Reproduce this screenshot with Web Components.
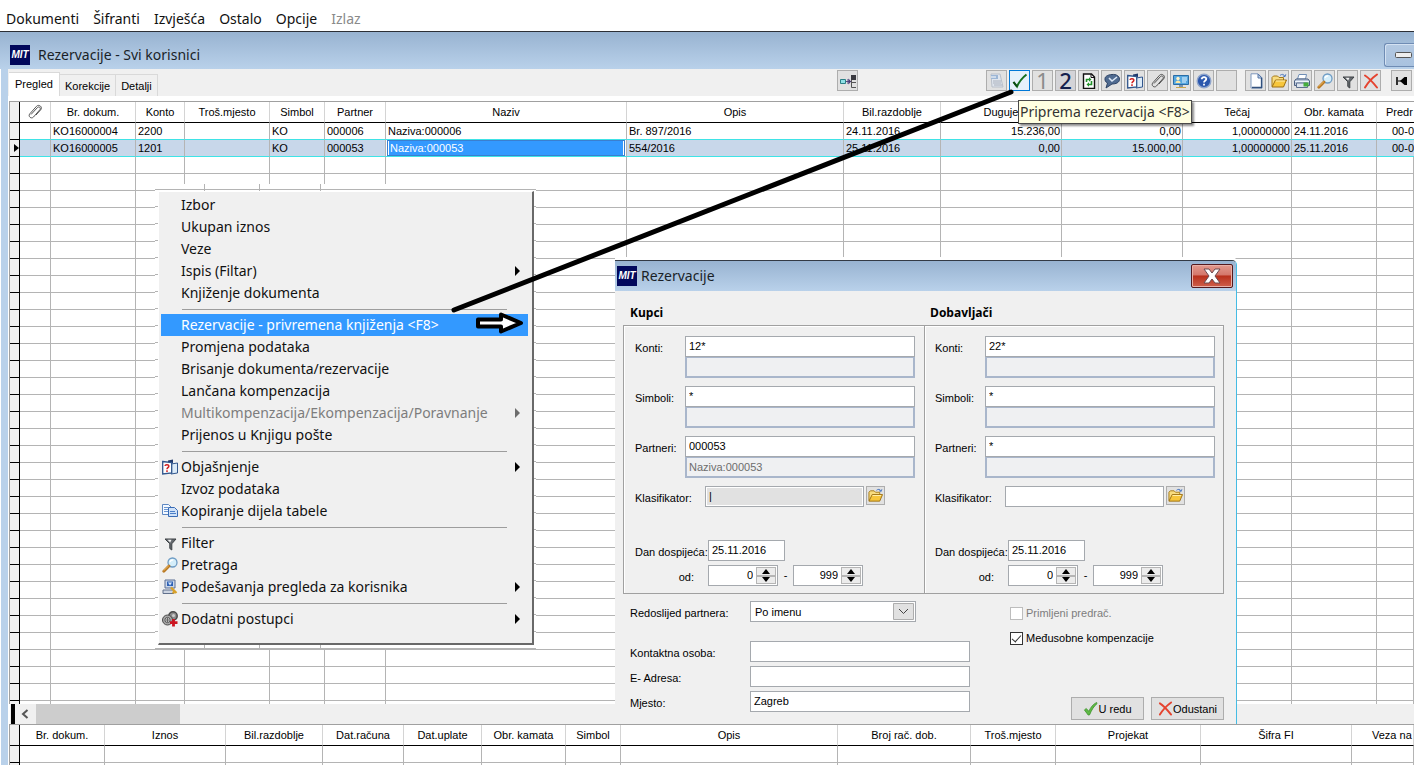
<!DOCTYPE html>
<html lang="hr">
<head>
<meta charset="utf-8">
<title>Rezervacije - Svi korisnici</title>
<style>
  html, body { margin: 0; height: 100%; overflow: hidden; background: #fff; }
</style>
</head>
<body>
<mit-app></mit-app>

<script>
const UI = '"Noto Sans", "Open Sans", sans-serif';
const SMALL = '"Liberation Sans", Arial, sans-serif';

function define(name, css, html, setup) {
  const template = document.createElement('template');
  template.innerHTML = `<style>*{box-sizing:border-box}${css}</style>${html}`;
  customElements.define(name, class extends HTMLElement {
    connectedCallback() {
      if (this.shadowRoot) return;
      this.attachShadow({ mode: 'open' }).append(template.content.cloneNode(true));
      if (setup) setup(this, this.shadowRoot);
    }
  });
}

/* ---------- icons, drawn on a 16 x 16 field ---------- */
const ICONS = {
  tree: `<path d="M0.5 6.5h5v4h-5z" fill="#8fe0e6" stroke="#2a7f86"/><path d="M6 8.5h5M8 6v5" stroke="#5b4a86" fill="none"/><path d="M8.500 5.500v6l2.500-3z" fill="#4a3a76"/><path d="M11 2h5v5h-5z" fill="#3a3a40"/><path d="M16 9.500h-4.500v5H16M11.500 7v3" stroke="#555" fill="none"/>`,
  form: `<path d="M2 1h9l3 13H3z" fill="#dfe5ee" stroke="#b9bfc9"/><path d="M2 2h7v4H2z" fill="#9cb6d6"/><path d="M4 8h8M4 10h8M5 12h8" stroke="#aab0bb"/><path d="M2 4h5" stroke="#fff"/>`,
  check: `<path d="M1.500 9L5 13.500C7 9 10 5 14.500 1.500" fill="none" stroke="#15701f" stroke-width="2"/><path d="M1.500 9L5 13.500" stroke="#0c4a12" stroke-width="2"/>`,
  refresh: `<path d="M2.500 1h8l3 3v11.500h-11z" fill="#fff" stroke="#111" stroke-width="1.400"/><path d="M10 1v3.500h3.500" fill="none" stroke="#111"/><path d="M5.500 9V6.500H8M10.500 8v3.500H8" fill="none" stroke="#23922b" stroke-width="1.600"/><path d="M8 4.200l2.500 2.300L8 8.800zM8 9.200l-2.500 2.300L8 13.800z" fill="#23922b"/>`,
  bubble: `<path d="M8 1.500C12 1 15.500 3 15.500 6.200 15.500 9.500 12 11 8 11L2 15 3.500 10C1.500 9 .8 7.500 1 5.500 1.300 3 4.500 1.700 8 1.500z" fill="#4f6a90" stroke="#2c4264"/><path d="M5 5l3 3 5-4" stroke="#dce8f6" stroke-width="1.600" fill="none"/>`,
  help2: `<path d="M6 1.500l5-1V4H6z" fill="#223a6c"/><path d="M9 5l6.500-1v10L9 15z" fill="#dcebf8" stroke="#31568d"/><path d="M.7 2.500l9 1v10.500l-9 1z" fill="#fff" stroke="#31568d" stroke-width="1.300"/><path d="M3 7c.3-2 4-1.700 3.800.3C6.600 8.700 5 8.500 5 10.200M5 11.300v1.600" stroke="#d02222" stroke-width="1.500" fill="none"/>`,
  clip: `<path d="M4 10.500L10.500 3.500c1.500-1.500 3.800.5 2.400 2.200L6.500 13c-2.200 2.400-5.800-.6-3.700-3.200L9.500 2.300C12 -.2 16 3 13.700 5.800L9 11" fill="none" stroke="#444" stroke-width=".9"/>`,
  card: `<path d="M.5 2.500h15v9h-15z" fill="#56a7e0" stroke="#2a6da6"/><circle cx="5" cy="5.500" r="1.700" fill="#fff2c8"/><path d="M2.500 10c0-3.500 5-3.500 5 0z" fill="#ffe7a0"/><path d="M9 5h5M9 7h5M9 9h4" stroke="#e9f6ff"/><path d="M6 12h4v2H6z" fill="#7c96b0"/><path d="M3 14h10v1H3z" fill="#caa64c"/>`,
  help: `<circle cx="8" cy="8" r="6.800" fill="#2b57ad" stroke="#8fa5cc" stroke-width="1.400"/><path d="M3.500 5.500a5 4 0 0 1 9 0z" fill="#6d92d6" opacity=".7"/><path d="M5.800 6.300c0-3 4.600-2.700 4.400-.2C10 7.800 8 7.700 8 9.500M8 10.800v1.700" stroke="#fff" stroke-width="1.800" fill="none"/>`,
  page: `<path d="M3 .8h7l4 4V15H3z" fill="#fdfeff" stroke="#7f98bd"/><path d="M10 1v4h4z" fill="#b9cde8" stroke="#5878a8"/><path d="M13.500 5v9.500H4" fill="none" stroke="#31507d" stroke-width="1.300"/>`,
  folder: `<path d="M1 13.500V4.500L2.500 3h4L8 4.500h4.500V7" fill="#f8dc80" stroke="#a67a18"/><path d="M1 14l3.500-7H15.500l-3 7z" fill="#f7c63c" stroke="#9c6f12"/><path d="M4.800 8H14" stroke="#fff0b0"/><path d="M9 2.500c2-1.800 4-1.200 4.700.6M14.800 1.300l-.8 2.400-2.200-.8" fill="none" stroke="#4c78c0"/>`,
  printer: `<path d="M5 1.500h7.500L11.500 6h-8z" fill="#fff" stroke="#6f8db5"/><path d="M2 6h12l1.500 2v4.500H.5V8z" fill="#b9c6da" stroke="#4b5f80"/><path d="M1 8.500h14" stroke="#eef4fb"/><path d="M2.500 10h11v4.500h-11z" fill="#dce4ee" stroke="#5c6f8e"/><path d="M9.500 9.500h5v4h-5z" fill="#45ad3d"/>`,
  search: `<circle cx="10.500" cy="5.500" r="4.500" fill="#d5eefa" stroke="#6d9bc4" stroke-width="1.300"/><path d="M8 5c.5-1.800 2-2.200 3.200-1.900" stroke="#fff" stroke-width="1.300" fill="none"/><path d="M7 9L1.800 14.200" stroke="#b77620" stroke-width="2.800" stroke-linecap="round"/><path d="M6.500 9L1.800 13.500" stroke="#f0bc62" stroke-linecap="round"/>`,
  funnel: `<path d="M3 4h11L9.800 8.800V15l-2-1.500V8.800z" fill="#666b70" stroke="#3d4145"/><path d="M5.500 4.800h4L8.200 7.500z" fill="#f4f4f4"/>`,
  cross: `<path d="M2 2.500C6 5 10 9.500 14 14.500M14 1.500C9 5 5 9.500 2 14.500" stroke="#e5432f" stroke-width="2" fill="none" stroke-linecap="round"/>`,
  first: `<path d="M3 4v8" stroke="#000" stroke-width="1.600"/><path d="M4 8h3" stroke="#000"/><path d="M6 8l4.500-4H13v8h-2.500z" fill="#000"/>`,
  copy: `<path d="M.5 1.500h6l2.500 2.500v7.500H.5z" fill="#f4f9ff" stroke="#5d87c2"/><path d="M2 4.500h4M2 6.500h5M2 8.500h4" stroke="#6d97d2"/><path d="M6.500 4.500h6l3 3v6h-9z" fill="#cfe1f8" stroke="#386bb5"/><path d="M8 8.500h5M8 10.500h6" stroke="#4c7fc8"/>`,
  settings: `<path d="M3 1h10v8H3z" fill="#cbd7ea" stroke="#5b6f94"/><path d="M5 2.500h6V7H5z" fill="#2f62b5"/><path d="M6 3.500l4 0-2 3z" fill="#d9e8fb"/><path d="M1 11h11v3.500H1z" fill="#cdd5e2" stroke="#61708c"/><path d="M9 8.500l5.500 5.500M12 12.500l-1 2" stroke="#d9a128" stroke-width="2.200"/>`,
  gears: `<circle cx="11" cy="5" r="4.200" fill="#8b8b8b" stroke="#4a4a4a" stroke-width="1.500"/><circle cx="11.500" cy="4.500" r="1.500" fill="#ccc"/><circle cx="5.500" cy="9" r="5" fill="#a6a6a6" stroke="#4a4a4a"/><circle cx="5.500" cy="9" r="2.600" fill="#d8d8d8" stroke="#555"/><path d="M5.500 7v4M4 9h3" stroke="#666"/><path d="M11.500 8v7.500M8 11.700h7.500" stroke="#cc1420" stroke-width="2.800"/>`,
  ok: `<path d="M1.500 9.500L3.500 8 6.200 11C8 7 10.500 3.500 14.500 1.500L15 2.800C11.500 5.500 9 10 7 14.800L5.500 15z" fill="#5fba45" stroke="#3c8f2c" stroke-width=".8"/>`
};
define('mit-icon', ':host{display:block;width:16px;height:16px;flex:none}svg{display:block;width:100%;height:100%}',
  '<svg viewBox="0 0 16 16" aria-hidden="true"></svg>',
  (el, root) => { root.querySelector('svg').innerHTML = ICONS[el.getAttribute('name')] || ''; });

define('mit-logo', `
  :host{display:block;width:20px;height:20px;flex:none;background:#02085c;color:#fff;
        font:italic bold 10px/20px ${SMALL};text-align:center;overflow:hidden}`, `MIT`);

/* ---------- application menu ---------- */
define('mit-menubar', `
  :host{display:block;flex:none;background:#fff;border-bottom:1px solid #2c2f36}
  nav{display:flex;gap:14px;height:31px;padding:6px 6px 0}
  button{border:0;padding:0;background:none;font:14px/24px ${UI};color:#111}
  button:disabled{color:#8a8a8a}`, `
  <nav><button>Dokumenti</button><button>Šifranti</button><button>Izvješća</button><button>Ostalo</button><button>Opcije</button><button disabled>Izlaz</button></nav>`);

/* ---------- window caption; the slot takes the caption buttons ---------- */
define('mit-caption', `
  :host{display:flex;align-items:center;gap:4px;flex:none;background:linear-gradient(#98b3d1,#b9d1ea)}
  h1{flex:1;margin:0;font:14px/24px ${UI};color:#1a1f28;white-space:nowrap}`, `
  <mit-logo></mit-logo><h1></h1><slot></slot>`,
  (el, root) => { root.querySelector('h1').textContent = el.getAttribute('text'); });

define('mit-tabs', `
  :host{display:flex;align-items:flex-end}
  button{height:22px;border:1px solid #d9d9d9;border-left:0;border-bottom:0;background:#f0f0f0;padding:0 5px;font:11px/20px ${SMALL};color:#000}
  button[aria-selected=true]{height:24px;background:#fff;padding:0 6px 2px}`, `
  <button role="tab" aria-selected="true">Pregled</button><button role="tab">Korekcije</button><button role="tab">Detalji</button>`);

define('mit-tool', `
  :host{display:block;flex:none}
  button{display:grid;place-items:center;width:21px;height:21px;padding:0;border:1px solid #adadad;background:#e1e1e1;font:22px/19px ${UI};color:#8b8b8b}
  :host([on]) button{border-color:#0078d7;background:#e5f1fb}
  :host([dark]) button{color:#14204e;background:#d4d4d8;font-weight:500}`, `<button><slot></slot></button>`,
  (el, root) => root.querySelector('button').setAttribute('aria-label', el.title || 'Alat'));

define('mit-toolbar', `
  :host{display:flex;flex:1;justify-content:flex-end;align-items:flex-start;padding:1px 2px 0 0}
  div{display:flex;gap:2px}
  .lone{margin-right:128px}.main{margin-right:8px}.edit{margin-right:10px}`, `
  <div class="lone"><mit-tool><mit-icon name="tree"></mit-icon></mit-tool></div>
  <div class="main">
    <mit-tool><mit-icon name="form"></mit-icon></mit-tool>
    <mit-tool on><mit-icon name="check"></mit-icon></mit-tool>
    <mit-tool>1</mit-tool><mit-tool dark>2</mit-tool>
    <mit-tool><mit-icon name="refresh"></mit-icon></mit-tool>
    <mit-tool><mit-icon name="bubble"></mit-icon></mit-tool>
    <mit-tool><mit-icon name="help2"></mit-icon></mit-tool>
    <mit-tool><mit-icon name="clip"></mit-icon></mit-tool>
    <mit-tool><mit-icon name="card"></mit-icon></mit-tool>
    <mit-tool><mit-icon name="help"></mit-icon></mit-tool>
    <mit-tool></mit-tool>
  </div>
  <div class="edit">
    <mit-tool><mit-icon name="page"></mit-icon></mit-tool>
    <mit-tool><mit-icon name="folder"></mit-icon></mit-tool>
    <mit-tool><mit-icon name="printer"></mit-icon></mit-tool>
    <mit-tool><mit-icon name="search"></mit-icon></mit-tool>
    <mit-tool><mit-icon name="funnel"></mit-icon></mit-tool>
    <mit-tool><mit-icon name="cross"></mit-icon></mit-tool>
  </div>
  <div><mit-tool><mit-icon name="first"></mit-icon></mit-tool></div>`);

/* ---------- data grids ---------- */
const GRIDS = {
  documents: {
    empty: 60,
    cols: [['@clip', 31], ['Br. dokum.', 85], ['Konto', 49], ['Troš.mjesto', 85], ['Simbol', 55], ['Partner', 61],
           ['Naziv', 241], ['Opis', 217], ['Bil.razdoblje', 97], ['Duguje', 121, 'r'], ['', 121, 'r'],
           ['Tečaj', 109, 'r'], ['Obr. kamata', 85], ['Predr', 0, 'cut']],
    rows: [
      ['', 'KO16000004', '2200', '', 'KO', '000006', 'Naziva:000006', 'Br. 897/2016', '24.11.2016', '15.236,00', '0,00', '1,00000000', '24.11.2016', '00-0'],
      ['', 'KO16000005', '1201', '', 'KO', '000053', 'Naziva:000053', '554/2016', '25.11.2016', '0,00', '15.000,00', '1,00000000', '25.11.2016', '00-0']
    ],
    selected: 1, editing: 6
  },
  items: {
    empty: 8,
    cols: [['Br. dokum.', 85], ['Iznos', 121], ['Bil.razdoblje', 97], ['Dat.računa', 81], ['Dat.uplate', 78], ['Obr. kamata', 84],
           ['Simbol', 55], ['Opis', 217], ['Broj rač. dob.', 133], ['Troš.mjesto', 85], ['Projekat', 145], ['Šifra FI', 151], ['Veza na', 0, 'wide']],
    rows: []
  }
};
define('mit-grid', `
  :host{display:block;overflow:hidden;background:#fff;border-left:1px solid #a0a0a0;border-top:1px solid #a0a0a0}
  table{table-layout:fixed;width:100%;border-collapse:separate;border-spacing:0;font:11px/16px ${SMALL};color:#000}
  th{height:21px;padding:0;font-weight:normal;border-bottom:1px solid #000;border-right:1px solid #d4d4d4;overflow:hidden;white-space:nowrap}
  th mit-icon{margin:auto}
  td{height:17px;padding:0 2px;border-right:1px solid #b4b4b4;border-bottom:1px solid #b4b4b4;overflow:hidden;white-space:nowrap}
  th:first-child,td:first-child{padding:0;background:#f0f0f0;border-right:1px solid #000;border-bottom:1px solid #000}
  td.r{text-align:right;padding-right:1px}
  td.cut{padding:0 0 0 15px}
  th.cut{text-align:left;padding-left:9px}
  td.cut,th.cut{border-right:0}
  th.wide{text-align:left;padding-left:20px}
  tr.before td:not(:first-child){border-bottom-color:#3fe3e6}
  tr.sel td:not(:first-child){background:#c8d7ea;border-bottom-color:#3fe3e6}
  tr.sel td.edit{padding:0 1px;background:#fff}
  input{display:block;width:100%;height:16px;border:solid #fff;border-width:1px 2px;outline:1px solid #3a7fd0;outline-offset:-1px;padding:0 1px;background:#3399ff;color:#fff;font:11px/14px ${SMALL}}
  .mark{display:block;width:0;margin-left:4px;border:solid transparent;border-width:4px 0 4px 5px;border-left-color:#000}`,
  `<table><colgroup></colgroup><thead><tr></tr></thead><tbody></tbody></table>`,
  (el, root) => {
    const g = GRIDS[el.getAttribute('source')];
    root.querySelector('colgroup').innerHTML = '<col style="width:10px">' +
      g.cols.map(c => c[1] ? `<col style="width:${c[1]}px">` : '<col>').join('');
    root.querySelector('thead tr').innerHTML = '<th></th>' + g.cols.map(([t, , k]) =>
      `<th class="${k || ''}">${t[0] === '@' ? `<mit-icon name="${t.slice(1)}"></mit-icon>` : t}</th>`).join('');
    const rows = g.rows.map((r, i) => {
      const sel = i === g.selected;
      return `<tr class="${sel ? 'sel' : i === g.selected - 1 ? 'before' : ''}"><td>${sel ? '<span class="mark"></span>' : ''}</td>` +
        r.map((v, j) => sel && j === g.editing
          ? `<td class="edit"><input value="${v}" aria-label="${g.cols[j][0]}"></td>`
          : `<td class="${g.cols[j][2] || ''}">${v}</td>`).join('') + '</tr>';
    });
    const blank = '<tr>' + '<td></td>'.repeat(g.cols.length + 1) + '</tr>';
    root.querySelector('tbody').innerHTML = rows.join('') + blank.repeat(g.empty);
  });

define('mit-scrollbar', `
  :host{display:flex;flex:none;height:20px;padding-left:1px;background:#f0f0f0;border-left:1px solid #fff}
  i{width:4px;background:#000}
  button{display:grid;place-items:center;width:21px;padding:0 2px 0 0;border:0;background:#f0f0f0}
  span{width:144px;background:#cdcdcd}`, `
  <i></i><button aria-label="Lijevo"><svg width="8" height="10" viewBox="0 0 8 10"><path d="M6.500 1L2 5l4.500 4" fill="none" stroke="#555" stroke-width="2"/></svg></button><span></span>`);

/* ---------- context menu ---------- */
define('mit-menu-item', `
  :host{display:block}
  button{display:flex;align-items:center;width:100%;height:22px;border:0;padding:0 8px 0 1px;background:none;font:14px/22px ${UI};color:#111;text-align:left;white-space:nowrap}
  .ico{width:19px;flex:none}.txt{flex:1}
  .arr{display:none;border:solid transparent;border-width:5px 0 5px 5px;border-left-color:#000}
  :host([sub]) .arr{display:block}
  :host([disabled]) button{color:#7d7d7d}:host([disabled]) .arr{border-left-color:#6d6d6d}
  :host([active]) button{background:#3399ff;color:#fff}`, `
  <button role="menuitem"><span class="ico"><slot name="icon"></slot></span><span class="txt"><slot></slot></span><span class="arr"></span></button>`,
  (el, root) => { root.querySelector('button').disabled = el.hasAttribute('disabled'); });

define('mit-context-menu', `
  :host{display:block;padding:7px 2px 4px 3px;
    background:
      linear-gradient(#b4b4b4,#b4b4b4) 49px 0/1px 100% no-repeat,
      linear-gradient(#b4b4b4,#b4b4b4) 104px 0/1px 100% no-repeat,
      linear-gradient(#b4b4b4,#b4b4b4) 165px 0/1px 100% no-repeat,
      repeating-linear-gradient(#fff 0 5px,#b4b4b4 5px 6px,#fff 6px 17px)}
  div{background:#f0f0f0;border:1px solid #fff;border-right:2px solid #696969;border-bottom:2px solid #696969;padding:2px 4px 13px 2px}
  hr{border:0;height:1px;margin:5px 21px 4px;background:#9d9d9d}`, `
  <div role="menu">
    <mit-menu-item>Izbor</mit-menu-item>
    <mit-menu-item>Ukupan iznos</mit-menu-item>
    <mit-menu-item>Veze</mit-menu-item>
    <mit-menu-item sub>Ispis (Filtar)</mit-menu-item>
    <mit-menu-item>Knjiženje dokumenta</mit-menu-item>
    <hr>
    <mit-menu-item active>Rezervacije - privremena knjiženja &lt;F8&gt;</mit-menu-item>
    <mit-menu-item>Promjena podataka</mit-menu-item>
    <mit-menu-item>Brisanje dokumenta/rezervacije</mit-menu-item>
    <mit-menu-item>Lančana kompenzacija</mit-menu-item>
    <mit-menu-item disabled sub>Multikompenzacija/Ekompenzacija/Poravnanje</mit-menu-item>
    <mit-menu-item>Prijenos u Knjigu pošte</mit-menu-item>
    <hr>
    <mit-menu-item sub><mit-icon slot="icon" name="help2"></mit-icon>Objašnjenje</mit-menu-item>
    <mit-menu-item>Izvoz podataka</mit-menu-item>
    <mit-menu-item><mit-icon slot="icon" name="copy"></mit-icon>Kopiranje dijela tabele</mit-menu-item>
    <hr>
    <mit-menu-item><mit-icon slot="icon" name="funnel"></mit-icon>Filter</mit-menu-item>
    <mit-menu-item><mit-icon slot="icon" name="search"></mit-icon>Pretraga</mit-menu-item>
    <mit-menu-item sub><mit-icon slot="icon" name="settings"></mit-icon>Podešavanja pregleda za korisnika</mit-menu-item>
    <hr>
    <mit-menu-item sub><mit-icon slot="icon" name="gears"></mit-icon>Dodatni postupci</mit-menu-item>
  </div>`);

/* ---------- dialog ---------- */
const FIELD = `
  label{font:11px/24px ${SMALL};color:#000;white-space:nowrap}
  input{display:block;height:21px;border:1px solid #a5a9ae;padding:0 3px 2px;margin:0;background:#fff;color:#000;font:11px/16px ${SMALL};outline:0;border-radius:0}`;

define('mit-spin', `${FIELD}
  :host{display:flex;width:70px;height:21px;border:1px solid #a5a9ae;background:#fff;padding:1px}
  input{flex:1;min-width:0;height:17px;border:0;padding:0 3px 1px 0;text-align:right}
  div{display:flex;flex-direction:column;width:20px}
  button{display:grid;place-items:center;flex:1;min-height:0;padding:0;border:1px solid #b5b5b5;background:#ececec}
  svg{display:block}`, `
  <input><div><button aria-label="Više"><svg width="8" height="5"><path d="M0 5L4 0l4 5z"/></svg></button><button aria-label="Manje"><svg width="8" height="5"><path d="M0 0L4 5l4-5z"/></svg></button></div>`,
  (el, root) => { const i = root.querySelector('input'); i.value = el.getAttribute('value'); i.setAttribute('aria-label', el.getAttribute('label')); });

define('mit-party', `${FIELD}
  :host{display:flex;flex-direction:column;gap:8px}
  .pair{display:grid;grid-template-columns:50px 230px;height:42px}
  .pair input{width:100%}
  input[readonly]{border:2px solid #a9b6cb;border-top-width:1px;background:#eff0f2;color:#6d6d6d;padding:0 2px 1px}
  .class{display:flex;height:21px}
  .class label{width:70px}.class input{width:159px;margin-right:2px}
  .class input[data-focus]{background:#e1e1e1;box-shadow:inset 0 0 0 1px #fff}
  .class button{width:19px;height:19px;padding:1px;border:1px solid #adadad;background:#e1e1e1}
  .class button mit-icon{width:15px;height:15px}
  .due{display:grid;grid-template-columns:73px auto auto auto;justify-content:start;row-gap:4px;margin-top:25px}
  .due input{width:77px;grid-column:2/5}
  .due label{height:21px}.due .from{text-align:right;padding-right:14px}
  .due span{width:15px;text-align:center;font:11px/20px ${SMALL}}`, `
  <div class="pair"><label for="a">Konti:</label><div><input id="a"><input readonly aria-label="Naziv konta"></div></div>
  <div class="pair"><label for="b">Simboli:</label><div><input id="b" value="*"><input readonly aria-label="Naziv simbola"></div></div>
  <div class="pair"><label for="c">Partneri:</label><div><input id="c"><input readonly id="cn" aria-label="Naziv partnera"></div></div>
  <div class="class"><label for="k">Klasifikator:</label><input id="k"><button aria-label="Otvori"><mit-icon name="folder"></mit-icon></button></div>
  <div class="due"><label for="d">Dan dospijeća:</label><input id="d" value="25.11.2016">
    <label class="from">od:</label><mit-spin value="0" label="od"></mit-spin><span>-</span><mit-spin value="999" label="do"></mit-spin></div>`,
  (el, root) => {
    root.getElementById('a').value = el.getAttribute('konti');
    root.getElementById('c').value = el.getAttribute('partneri');
    root.getElementById('cn').value = el.getAttribute('naziv') || '';
    if (el.hasAttribute('focused')) { const k = root.getElementById('k'); k.dataset.focus = ''; k.value = '|'; }
  });

define('mit-dialog', `${FIELD}
  :host{display:block;width:622px;background:#f0f0f0;border-top:1px solid #333a45;border-right:1px solid #45bce4;border-radius:0 5px 0 0;overflow:hidden;box-shadow:0 -3px #fff}
  mit-caption{height:30px;padding:0 3px 0 2px}
  .close{align-self:flex-start;display:grid;place-items:center;width:42px;height:24px;margin-top:3px;padding:0;border:1px solid #541a1e;border-radius:2px;background:linear-gradient(#e39a8e,#d4776b 45%,#b8301c 50%,#cf5f4b);box-shadow:inset 0 0 0 1px #e8b0a8}
  .body{padding:10px 12px 12px 8px}
  .heads,.box{display:grid;grid-template-columns:302px 1fr}
  h2{margin:0;padding-left:7px;font:bold 12px/24px "Open Sans",sans-serif}
  h2 + h2{padding-left:5px}
  .box{border:1px solid #a0a0a0;box-shadow:inset 1px 1px #fff;grid-template-columns:301px 1fr}
  .box mit-party{padding:10px 9px 7px 11px}
  .box mit-party:first-child{border-right:1px solid #a0a0a0}
  .box mit-party:last-child{padding-left:10px;box-shadow:inset 1px 0 #fff}
  .foot{display:flex;padding:7px 0 0 7px}
  .form{display:grid;grid-template-columns:120px 220px;grid-template-rows:36px;grid-auto-rows:21px;row-gap:4px}
  .form input{width:100%}
  .drop{position:relative;width:166px;height:21px}
  select{display:block;appearance:none;width:100%;height:21px;border:1px solid #a5a9ae;border-radius:0;background:#fff;padding:0 4px;font:11px/16px ${SMALL};color:#000}
  .drop svg{position:absolute;right:2px;top:2px;pointer-events:none}
  .side{flex:1;display:flex;flex-direction:column;padding-left:40px}
  .side label{display:flex;align-items:center;gap:3px;height:25px;line-height:25px}
  .side label.off{color:#7d7d7d}
  .side input{appearance:none;width:13px;height:13px;padding:0;border:1px solid #333}
  .side .off input{border-color:#bdbdbd}
  .side input:checked::after{content:"";display:block;width:8px;height:4px;margin:2px 0 0 1px;border:solid #333;border-width:0 0 1px 1px;transform:rotate(-48deg)}
  .acts{display:flex;gap:7px;justify-content:flex-end;margin-top:auto;margin-bottom:-8px}
  .acts button{display:flex;align-items:center;justify-content:center;gap:0;width:73px;height:23px;padding:0;border:1px solid #adadad;background:#e1e1e1;font:11px/20px ${SMALL};color:#000}
  .acts mit-icon{width:15px;height:15px}`, `
  <mit-caption text="Rezervacije"><button class="close" aria-label="Zatvori"><svg width="18" height="16" viewBox="0 0 18 16"><path d="M1 1h5l3 4 3-4h5l-5 7 5 7h-5l-3-4-3 4H1l5-7z" fill="#fff" stroke="#6a4a50"/></svg></button></mit-caption>
  <div class="body">
    <div class="heads"><h2>Kupci</h2><h2>Dobavljači</h2></div>
    <div class="box">
      <mit-party konti="12*" partneri="000053" naziv="Naziva:000053" focused></mit-party>
      <mit-party konti="22*" partneri="*"></mit-party>
    </div>
    <div class="foot">
      <div class="form">
        <label for="r">Redoslijed partnera:</label><div class="drop"><select id="r"><option>Po imenu</option></select>
          <svg width="21" height="17" viewBox="0 0 21 17"><path d="M.5.5h20v16H.5z" fill="#e1e1e1" stroke="#adadad"/><path d="M6 6l4.500 4.500L15 6" fill="none" stroke="#444"/></svg></div>
        <label for="o">Kontaktna osoba:</label><input id="o">
        <label for="e">E- Adresa:</label><input id="e">
        <label for="m">Mjesto:</label><input id="m" value="Zagreb">
      </div>
      <div class="side">
        <label class="off"><input type="checkbox" disabled>Primljeni predrač.</label>
        <label><input type="checkbox" checked>Međusobne kompenzacije</label>
        <div class="acts"><button><mit-icon name="ok"></mit-icon>U redu</button><button><mit-icon name="cross"></mit-icon>Odustani</button></div>
      </div>
    </div>
  </div>`);

define('mit-tooltip', `
  :host{display:block;padding:0 1px;border:1px solid #4a4a4a;background:#ffffe1;box-shadow:2px 2px 2px rgba(0,0,0,.45);font:14px/22px ${UI};color:#333;white-space:nowrap}`, `<slot></slot>`);

/* ---------- hand-drawn notes over the window ---------- */
define('mit-notes', `:host{display:block;pointer-events:none}svg{display:block;overflow:visible}`, `
  <svg width="1" height="1" aria-hidden="true">
    <path d="M454 310L1011 92" stroke="#000" stroke-width="5" stroke-linecap="round"/>
    <path d="M478 319.500h23v-5l20 8.500-20 8.500v-5h-23z" fill="#fff" stroke="#000" stroke-width="4" stroke-linejoin="round"/>
  </svg>`);

define('mit-app', `
  :host{display:flex;flex-direction:column;position:relative;height:100vh;overflow:hidden}
  .title{height:37px;padding:8px 0 0 10px;gap:8px}
  .min{display:grid;place-items:center;width:30px;height:24px;padding:0 0 0 8px;border:1px solid #6f8cb4;border-right:0;border-radius:3px 0 0 3px;background:linear-gradient(#b4c9e2,#a9c2df);box-shadow:inset 1px 1px #d4e2f2}
  main{flex:1;min-height:0;display:flex;flex-direction:column;margin-left:1px;border-left:7px solid #b9d1ea;background:#fff}
  .bar{display:flex;height:27px;flex:none;padding-left:1px;margin-bottom:5px;background:#f0f0f0}
  .bar mit-tabs{height:27px}
  .top{flex:1;min-height:0;margin-left:1px}
  .bottom{flex:none;height:41px;margin-left:1px}
  mit-scrollbar{margin-left:1px}
  mit-context-menu,mit-dialog,mit-tooltip,mit-notes{position:absolute}
  mit-context-menu{left:155px;top:184px;width:381px}
  mit-dialog{left:615px;top:260px}
  mit-tooltip{left:1018px;top:100px}
  mit-notes{left:0;top:0}`, `
  <mit-menubar></mit-menubar>
  <mit-caption class="title" text="Rezervacije - Svi korisnici"><button class="min" aria-label="Smanji"><svg width="17" height="6"><rect x=".5" y=".5" width="16" height="5" rx="1" fill="#eee" stroke="#555"/></svg></button></mit-caption>
  <main>
    <div class="bar"><mit-tabs></mit-tabs><mit-toolbar></mit-toolbar></div>
    <mit-grid class="top" source="documents"></mit-grid>
    <mit-scrollbar></mit-scrollbar>
    <mit-grid class="bottom" source="items"></mit-grid>
  </main>
  <mit-context-menu></mit-context-menu>
  <mit-dialog></mit-dialog>
  <mit-tooltip>Priprema rezervacija &lt;F8&gt;</mit-tooltip>
  <mit-notes></mit-notes>`);
</script>
</body>
</html>
